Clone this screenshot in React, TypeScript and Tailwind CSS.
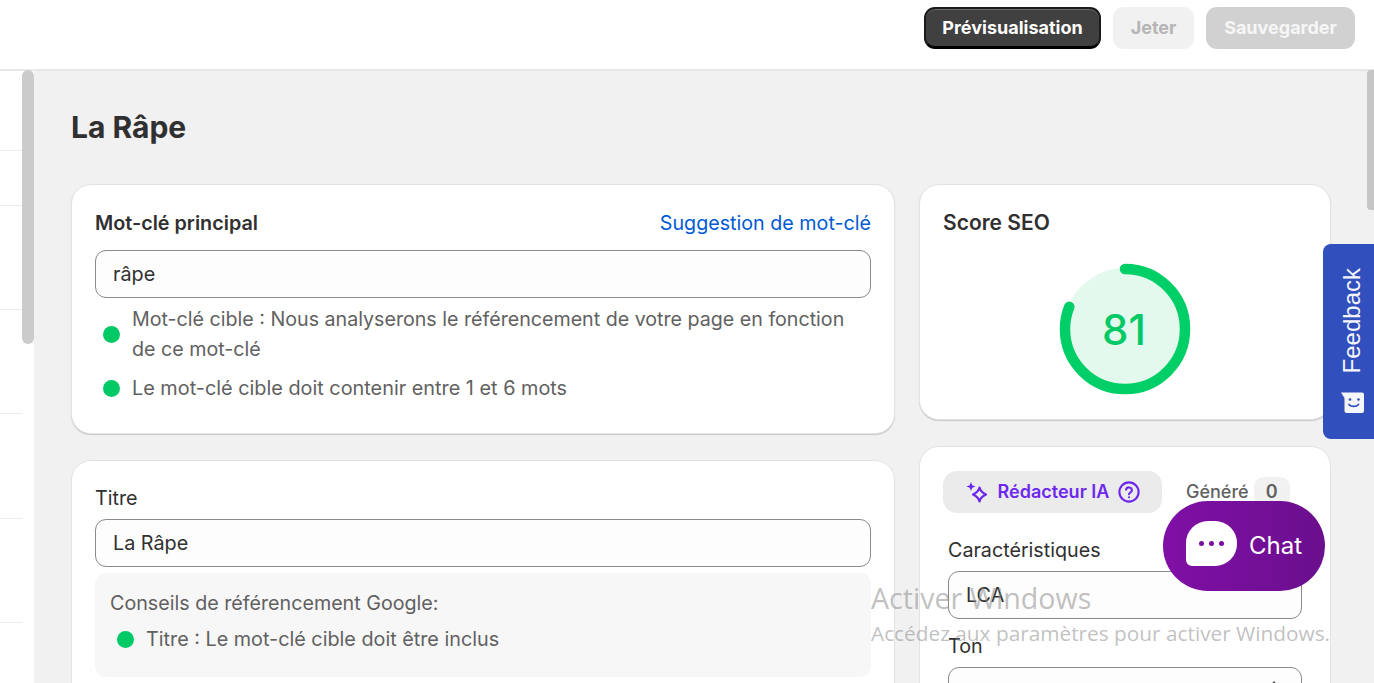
import React from "react";

const Dot = ({ className = "" }: { className?: string }) => (
  <span className={`h-[17px] w-[17px] shrink-0 rounded-full bg-[#00c965] ${className}`} />
);

const Field = ({ value, className = "" }: { value: string; className?: string }) => (
  <div className={`flex h-[48px] items-center rounded-[11px] border border-[#8a8a8a] bg-[#fdfdfd] px-[17px] text-[19.8px] text-[#303030] ${className}`}>
    {value}
  </div>
);

export default function App() {
  return (
    <div className="relative flex h-[683px] w-[1374px] flex-col overflow-hidden bg-white font-['Inter',sans-serif] text-[19.7px] leading-[30px] text-[#303030]">
      {/* top bar */}
      <header className="flex h-[71px] shrink-0 items-start justify-end gap-[12px] border-b-2 border-[#e8e8e8] pr-[19px] pt-[7px] text-[18px] font-bold">
        <button className="h-[42px] w-[177px] rounded-[11px] border-2 border-b-[3px] border-[#1a1a1a] border-b-black bg-[#404040] text-white shadow-[inset_0_1px_0_#6b6b6b]">Prévisualisation</button>
        <button className="h-[42px] w-[81px] rounded-[11px] bg-[#f1f1f1] text-[#b5b5b5]">Jeter</button>
        <button className="h-[42px] w-[149px] rounded-[11px] bg-[#d1d1d1] text-[#f6f6f6]">Sauvegarder</button>
      </header>

      <div className="flex min-h-0 flex-1">
        {/* left rail */}
        <div className="flex w-[22px] shrink-0 flex-col">
          <div className="h-[80px] shrink-0 border-b border-[#ebebeb]" />
          <div className="h-[55px] shrink-0 border-b border-[#ebebeb]" />
          <div className="h-[104px] shrink-0 border-b border-[#ebebeb]" />
          <div className="h-[104px] shrink-0 border-b border-[#ebebeb]" />
          <div className="h-[105px] shrink-0 border-b border-[#ebebeb]" />
          <div className="h-[104px] shrink-0 border-b border-[#ebebeb]" />
        </div>
        {/* left scrollbar */}
        <div className="w-[12px] shrink-0 bg-white">
          <div className="-mt-[1px] h-[274px] w-[12px] rounded-[6px] bg-[#cbcbcb]" />
        </div>

        {/* main */}
        <main className="min-w-0 flex-1 bg-[#f1f1f1] pl-[37px] pt-[38px]">
          <h1 className="h-[36px] text-[30px] font-bold leading-[36px] text-[#303030]">La Râpe</h1>
          <div className="mt-[39px] flex items-start gap-[24px]">
            {/* left column */}
            <div className="flex w-[824px] shrink-0 flex-col gap-[26px]">
              <section className="h-[250px] rounded-[20px] border border-[#e3e3e3] bg-white px-[23px] pt-[23px] shadow-[0_1px_1px_#c8c8c8]">
                <div className="flex items-center justify-between">
                  <span className="text-[19.8px] font-semibold">Mot-clé principal</span>
                  <span className="text-[#005bd3]">Suggestion de mot-clé</span>
                </div>
                <Field value="râpe" className="mt-[12px]" />
                <div className="mt-[6px] flex items-center gap-[12px] pl-[8px] text-[19.65px] text-[#616161]">
                  <Dot />
                  <span>Mot-clé cible : Nous analyserons le référencement de votre page en fonction de ce mot-clé</span>
                </div>
                <div className="mt-[9px] flex items-center gap-[12px] pl-[8px] text-[19.85px] text-[#616161]">
                  <Dot />
                  <span>Le mot-clé cible doit contenir entre 1 et 6 mots</span>
                </div>
              </section>
              <section className="h-[260px] rounded-[20px] border border-[#e3e3e3] bg-white px-[23px] pt-[22px]">
                <div>Titre</div>
                <Field value="La Râpe" className="mt-[6px]" />
                <div className="mt-[6px] h-[104px] rounded-[11px] bg-[#f7f7f7] px-[15px] pt-[15px] text-[#616161]">
                  <div>Conseils de référencement Google:</div>
                  <div className="mt-[6px] flex items-center gap-[12px] pl-[7px]">
                    <Dot />
                    <span className="text-[19.8px]">Titre : Le mot-clé cible doit être inclus</span>
                  </div>
                </div>
              </section>
            </div>

            {/* right column */}
            <div className="flex w-[412px] shrink-0 flex-col gap-[26px]">
              <section className="h-[236px] rounded-[20px] border border-[#e3e3e3] bg-white px-[23px] pt-[23px] shadow-[0_1px_1px_#c8c8c8]">
                <div className="text-[21px] font-semibold">Score SEO</div>
                <div className="mt-[25px] flex justify-center">
                  <div className="relative h-[132px] w-[132px]">
                    <svg viewBox="0 0 132 132" className="h-full w-full">
                      <circle cx="66" cy="66" r="61" fill="#e3f9ed" />
                      <circle
                        cx="66"
                        cy="66"
                        r="60"
                        fill="none"
                        stroke="#00cf68"
                        strokeWidth="10.5"
                        strokeLinecap="round"
                        strokeDasharray="305 377"
                        transform="rotate(-90 66 66)"
                      />
                    </svg>
                    <span className="absolute inset-0 flex items-center justify-center pr-[2px] pt-[2px] text-[42px] font-medium text-[#00c965]">81</span>
                  </div>
                </div>
              </section>
              <section className="h-[260px] rounded-[20px] border border-[#e3e3e3] bg-white px-[23px] pt-[24px]">
                <div className="flex items-center">
                  <div className="flex h-[42px] w-[219px] items-center justify-center gap-[9px] rounded-[14px] bg-[#ebebeb] text-[18px] font-semibold text-[#6e27ee]">
                    <svg viewBox="0 0 24 24" className="h-[24px] w-[24px]" fill="none" stroke="#6e27ee" strokeWidth="2.2">
                      <path d="M14.5 7.5c.8 3.4 2.4 5.2 6.5 7-4.1 1.8-5.7 3.6-6.5 7-.8-3.4-2.4-5.2-6.5-7 4.1-1.8 5.7-3.6 6.5-7z" strokeLinejoin="round" />
                      <path d="M6 2l1.3 3.2L10.5 6.5 7.3 7.8 6 11 4.7 7.8 1.5 6.5l3.2-1.3z" fill="#6e27ee" stroke="none" />
                    </svg>
                    <span>Rédacteur IA</span>
                    <svg viewBox="0 0 24 24" className="h-[22px] w-[22px]" fill="none" stroke="#6e27ee" strokeWidth="2.3" strokeLinecap="round">
                      <circle cx="12" cy="12" r="10.5" />
                      <path d="M8.8 9.4a3.2 3.2 0 0 1 6.3.9c0 2-3.1 2.4-3.1 4.1" />
                      <path d="M12 17.8h.01" />
                    </svg>
                  </div>
                  <span className="ml-[24px] text-[18px] font-medium text-[#616161]">Généré</span>
                  <span className="ml-[5px] flex h-[30px] w-[36px] items-center justify-center rounded-[10px] bg-[#f1f1f1] text-[18px] font-semibold text-[#616161]">0</span>
                </div>
                <div className="pl-[5px] pr-[5px]">
                  <div className="mt-[22px]">Caractéristiques</div>
                  <Field value="LCA" className="mt-[6px]" />
                  <div className="mt-[12px]">Ton</div>
                  <div className="relative mt-[6px] h-[48px] rounded-[11px] border border-[#8a8a8a] bg-[#fdfdfd]">
                    <svg viewBox="0 0 12 16" className="absolute right-[21px] top-[12px] h-[16px] w-[12px]" fill="#4a4a4a">
                      <path d="M6 1l4 5H2z" />
                      <path d="M6 15l4-5H2z" />
                    </svg>
                  </div>
                </div>
              </section>
            </div>
          </div>
        </main>

        {/* right scrollbar */}
        <div className="absolute right-0 top-[70px] h-[140px] w-[7px] rounded-l-[4px] bg-[#c6c6c6]" />
      </div>

      {/* feedback tab */}
      <div className="absolute right-0 top-[244px] flex h-[195px] w-[51px] flex-col items-center justify-end gap-[19px] rounded-l-[8px] bg-[#324fbe] pb-[26px] pl-[7px] font-['Liberation_Sans',sans-serif]">
        <span className="rotate-180 text-[24px] leading-none text-[#f4f6fb] [writing-mode:vertical-rl]">Feedback</span>
        <svg viewBox="0 0 23 21" className="h-[21px] w-[23px] shrink-0">
          <path d="M0 .5L21 .5Q23 .5 23 2.5V19Q23 21 21 21H5.5Q3.5 21 3.5 19V6Z" fill="#f4f6fb" />
          <circle cx="9" cy="7.5" r="1.3" fill="#324fbe" />
          <circle cx="17.5" cy="7.5" r="1.3" fill="#324fbe" />
          <path d="M8 12.5c2 2.6 7.5 2.6 9.5 0" stroke="#324fbe" strokeWidth="1.7" fill="none" strokeLinecap="round" />
        </svg>
      </div>

      {/* chat pill */}
      <div className="absolute left-[1163px] top-[501px] flex h-[90px] w-[162px] items-center gap-[12px] rounded-[45px] bg-gradient-to-r from-[#800fa6] to-[#6a0f8d] pl-[23px]">
        <div className="mb-[5px] flex h-[45px] w-[51px] items-center justify-center gap-[5px] rounded-[22px] rounded-bl-[6px] bg-white">
          <span className="h-[5px] w-[5px] rounded-full bg-[#7a0f9e]" />
          <span className="h-[5px] w-[5px] rounded-full bg-[#7a0f9e]" />
          <span className="h-[5px] w-[5px] rounded-full bg-[#7a0f9e]" />
        </div>
        <span className="text-[24px] leading-none text-white">Chat</span>
      </div>

      {/* Windows watermark */}
      <div className="pointer-events-none absolute left-[871px] top-[579px] font-['Open_Sans',sans-serif] text-[#8c8c8c]/55">
        <div className="text-[28.6px] leading-[38px]">Activer Windows</div>
        <div className="mt-[2px] whitespace-nowrap text-[20.8px] leading-[28px]">Accédez aux paramètres pour activer Windows.</div>
      </div>
    </div>
  );
}
